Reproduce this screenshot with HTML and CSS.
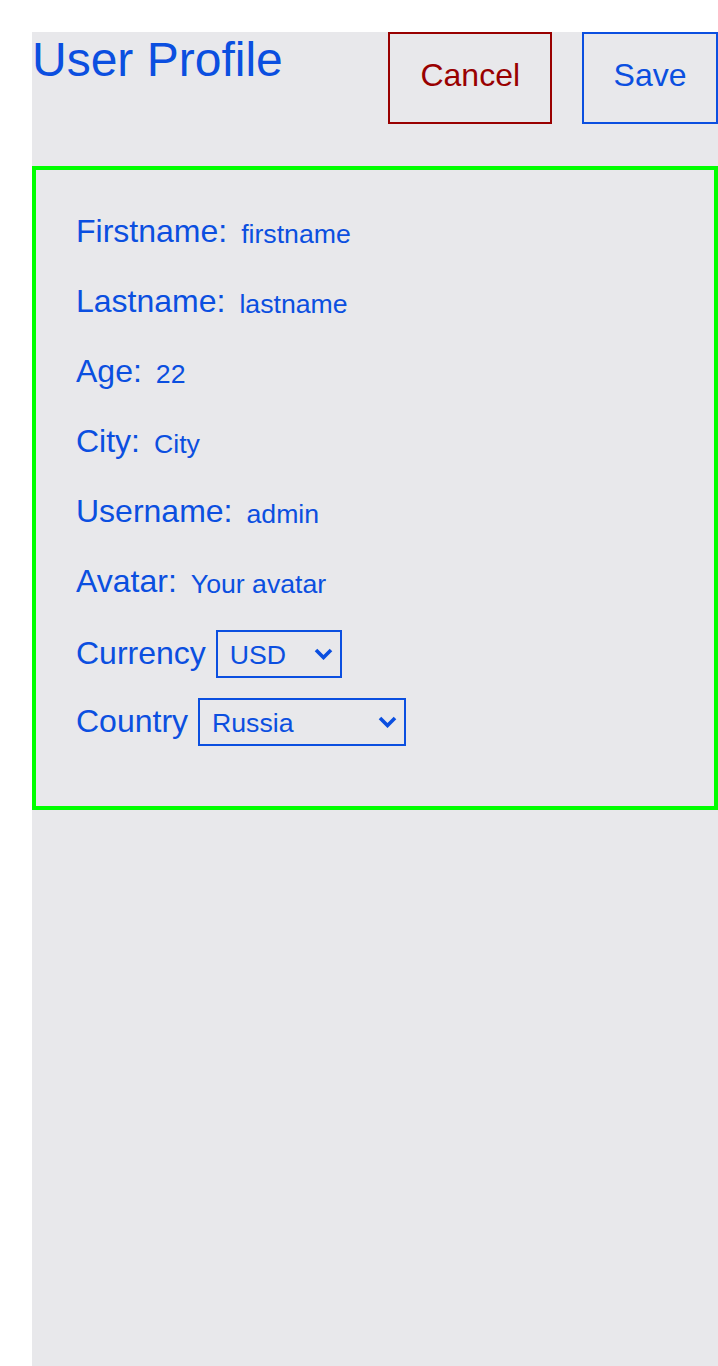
FILE: index.html
```html
<!DOCTYPE html>
<html lang="en">
<head>
<meta charset="utf-8">
<title>User Profile</title>
<link rel="stylesheet" href="styles.css">
</head>
<body>
<div class="page">
  <header class="header">
    <h1 class="title">User Profile</h1>
    <div class="actions">
      <button class="btn btn-cancel" type="button">Cancel</button>
      <button class="btn btn-save" type="button">Save</button>
    </div>
  </header>
  <div class="card">
    <div class="row"><span class="label">Firstname:</span><span class="value">firstname</span></div>
    <div class="row"><span class="label">Lastname:</span><span class="value">lastname</span></div>
    <div class="row"><span class="label">Age:</span><span class="value">22</span></div>
    <div class="row"><span class="label">City:</span><span class="value">City</span></div>
    <div class="row"><span class="label">Username:</span><span class="value">admin</span></div>
    <div class="row"><span class="label">Avatar:</span><span class="value">Your avatar</span></div>
    <div class="select-row">
      <span class="label">Currency</span>
      <span class="select-wrap">
        <select class="select select-currency"><option>USD</option><option>EUR</option><option>RUB</option></select>
        <svg class="chevron" width="19" height="12" viewBox="0 0 19 12"><polyline points="2,2 9.5,9.5 17,2" fill="none" stroke="currentColor" stroke-width="3.6"/></svg>
      </span>
    </div>
    <div class="select-row">
      <span class="label">Country</span>
      <span class="select-wrap">
        <select class="select select-country"><option>Russia</option><option>Belarus</option><option>Ukraine</option></select>
        <svg class="chevron" width="19" height="12" viewBox="0 0 19 12"><polyline points="2,2 9.5,9.5 17,2" fill="none" stroke="currentColor" stroke-width="3.6"/></svg>
      </span>
    </div>
  </div>
</div>
</body>
</html>
```
FILE: styles.css
```css
html, body {
  margin: 0;
  padding: 0;
  background: #ffffff;
}

body {
  font-family: "Liberation Sans", Arial, sans-serif;
  color: #0b4fe0;
}

.page {
  margin: 32px 0 0 32px;
  min-height: calc(100vh - 32px);
  background: #e8e8eb;
}

.header {
  display: flex;
  justify-content: space-between;
  align-items: flex-start;
}

.title {
  margin: 0;
  font-size: 48px;
  font-weight: 400;
  line-height: normal;
  color: #0b4fe0;
}

.actions {
  display: flex;
  gap: 30px;
}

.btn {
  font-family: "Liberation Sans", Arial, sans-serif;
  font-size: 32px;
  line-height: normal;
  padding: 23px 30px 28px;
  background: transparent;
  border: 2px solid;
  cursor: pointer;
}

.btn-cancel {
  color: #990000;
  border-color: #990000;
}

.btn-save {
  color: #0b4fe0;
  border-color: #0b4fe0;
  padding-left: 29.5px;
  padding-right: 29.5px;
}

.card {
  margin-top: 42px;
  border: 4px solid #00ff00;
  padding: 40px 40px 60px;
  display: flex;
  flex-direction: column;
  gap: 20px;
}

.row {
  display: flex;
  align-items: flex-end;
  height: 50px;
  padding-bottom: 10px;
  box-sizing: border-box;
}

.label {
  font-size: 32px;
  line-height: normal;
}

.value {
  font-size: 26.67px;
  line-height: normal;
  margin-left: 14px;
}

.select-row {
  display: flex;
  align-items: baseline;
  gap: 10px;
}

.select-wrap {
  position: relative;
  display: inline-flex;
  color: #0b4fe0;
}

.select {
  appearance: none;
  -webkit-appearance: none;
  font-family: "Liberation Sans", Arial, sans-serif;
  font-size: 26.67px;
  line-height: normal;
  color: #0b4fe0;
  background: transparent;
  border: 2px solid #0b4fe0;
  border-radius: 0;
  padding: 8px 12px;
  height: 48px;
  box-sizing: border-box;
  margin: 0;
}

.select-currency {
  width: 126px;
}

.select-country {
  width: 208px;
}

.chevron {
  position: absolute;
  right: 9px;
  top: 18px;
  pointer-events: none;
}
```
